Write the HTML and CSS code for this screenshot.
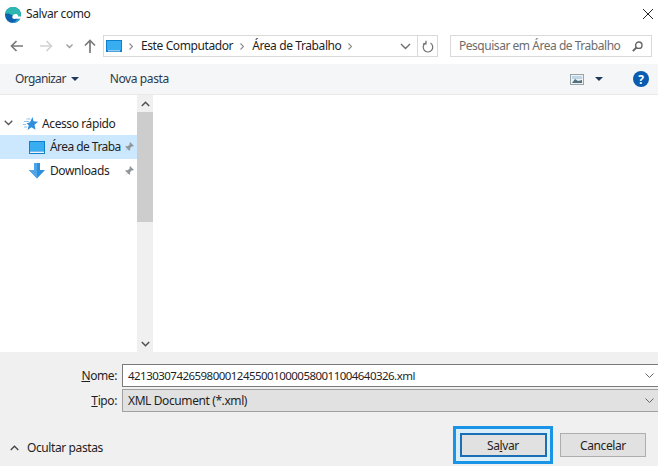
FILE: index.html
```html
<!DOCTYPE html>
<html lang="pt">
<head>
<meta charset="utf-8">
<title>Salvar como</title>
<link rel="stylesheet" href="styles.css">
</head>
<body>
<div class="dialog">
  <header class="titlebar">
    <svg class="edge" width="16" height="16" viewBox="0 0 16 16">
      <circle cx="8" cy="8" r="8" fill="#0d62ae"/>
      <path d="M.3 7C1 2.500 4.500 0 8 0c4.500 0 8 3.300 8 7.500 0 1.500-.6 2.500-2 2.800L7 8C4.500 6.300 1.500 6 .3 7z" fill="#2bb8b0"/>
      <path d="M7 15.900c3 .6 7-1 8.400-4.300l-3.400.8c-1.500 2-3.500 3-5 3.500z" fill="#2f9fd6"/>
      <path d="M7.300 10.300C7 8.200 9 6.700 11 7c1.600.3 2.300 1.300 2.100 2.600H16c0 1-.2 1.700-.6 2.200H10.500C8.800 12.300 7.500 11.700 7.300 10.300z" fill="#fff"/>
    </svg>
    <span class="title">Salvar como</span>
    <svg class="close" width="10" height="10" viewBox="0 0 10 10"><path d="M0 0l10 10M10 0L0 10" stroke="#222" stroke-width="1" fill="none"/></svg>
  </header>

  <nav class="navbar">
    <svg class="nav-btn" width="13" height="12" viewBox="0 0 13 12"><path d="M13 6H1.500M6.500 1L1.500 6l5 5" stroke="#7a7a7a" stroke-width="1.700" fill="none"/></svg>
    <svg class="nav-btn nav-forward" width="13" height="12" viewBox="0 0 13 12"><path d="M0 6h11.500M6.500 1l5 5-5 5" stroke="#d2d2d2" stroke-width="1.700" fill="none"/></svg>
    <svg class="nav-recent" width="7" height="5" viewBox="0 0 7 5"><path d="M.5.500L3.500 3.500 6.500.500" stroke="#9a9a9a" stroke-width="1.300" fill="none"/></svg>
    <svg class="nav-up" width="12" height="14" viewBox="0 0 12 14"><path d="M6 14V1.500M1 6.500l5-5 5 5" stroke="#7a7a7a" stroke-width="1.700" fill="none"/></svg>
    <div class="address">
      <svg class="monitor" width="16" height="12" viewBox="0 0 16 12"><rect width="16" height="12" fill="#0f7fd0"/><rect x="1" y="1" width="14" height="9" fill="#38aef0"/><rect x="2" y="10.300" width="12" height="1" fill="#d8eefb"/></svg>
      <svg class="crumb-sep" width="4" height="7" viewBox="0 0 4 7"><path d="M.5.500l3 3-3 3" stroke="#8a8a8a" stroke-width="1.100" fill="none"/></svg>
      <span class="crumb">Este Computador</span>
      <svg class="crumb-sep" width="4" height="7" viewBox="0 0 4 7"><path d="M.5.500l3 3-3 3" stroke="#8a8a8a" stroke-width="1.100" fill="none"/></svg>
      <span class="crumb">Área de Trabalho</span>
      <svg class="crumb-sep" width="4" height="7" viewBox="0 0 4 7"><path d="M.5.500l3 3-3 3" stroke="#8a8a8a" stroke-width="1.100" fill="none"/></svg>
      <span class="spacer"></span>
      <svg class="addr-chevron" width="11" height="7" viewBox="0 0 11 7"><path d="M1 1l4.500 4.500L10 1" stroke="#6d6d6d" stroke-width="1.400" fill="none"/></svg>
      <span class="addr-refresh">
        <svg width="12" height="13" viewBox="0 0 12 13"><path d="M3.800 2.400A4.800 4.800 0 1 0 8.500 2.600M4 .2v3.200H.9" stroke="#6f6f6f" stroke-width="1.200" fill="none" transform="translate(0 .5)"/></svg>
      </span>
    </div>
    <div class="search">
      <span class="search-text">Pesquisar em Área de Trabalho</span>
      <svg width="11" height="11" viewBox="0 0 11 11"><circle cx="6.800" cy="4.200" r="3.200" stroke="#666" stroke-width="1.400" fill="none"/><path d="M4.500 6.500L.8 10.200" stroke="#666" stroke-width="1.800"/></svg>
    </div>
  </nav>

  <div class="toolbar">
    <span class="tool organize">Organizar</span>
    <span class="caret"></span>
    <span class="tool new-folder">Nova pasta</span>
    <span class="spacer"></span>
    <svg class="view-icon" width="14" height="11" viewBox="0 0 14 11"><rect x=".5" y=".5" width="13" height="10" fill="#eef2f5" stroke="#9aa3a8"/><rect x="2" y="2" width="10" height="3" fill="#bcd6e6"/><path d="M2 9l3-4 3 2 4-1v3z" fill="#54707f"/></svg>
    <span class="caret caret-view"></span>
    <span class="help">?</span>
  </div>

  <main class="browser">
    <aside class="tree">
      <div class="tree-row tree-quick">
        <svg class="twisty" width="9" height="6" viewBox="0 0 9 6"><path d="M.7.700L4.500 4.500 8.300.700" stroke="#555" stroke-width="1.300" fill="none"/></svg>
        <svg class="star" width="15" height="13" viewBox="0 0 15 13"><path d="M9.500 0l1 4.300 4.500.4-3.500 3 1 5-4-2.500L4.500 13l1.300-4.800L3.500 6.500 7 5.300z" fill="#2f8fdc"/><path d="M0 7.500h3M1 10h3M1 4.500h5M3.500 2h4" stroke="#8cc4ee" stroke-width="1"/></svg>
        <span>Acesso rápido</span>
      </div>
      <div class="tree-row tree-item selected">
        <svg class="tree-icon" width="16" height="13" viewBox="0 0 16 13"><rect width="16" height="13" fill="#0f7fd0"/><rect x="1" y="1" width="14" height="9" fill="#38aef0"/><rect x="1" y="10.500" width="14" height="1.500" fill="#eaf6fd"/></svg>
        <span class="tree-label tree-label-clip">Área de Traba</span>
        <svg class="pin" width="10" height="10" viewBox="0 0 10 10"><path d="M6 0l4 4-1 .6-1-.3L6 6.300l.3 1.700-1 .8L3.500 7 .5 10l2.800-3.300L1.300 4.800l.8-.8 1.700.3 2-2-.3-1z" fill="#8f979b"/></svg>
      </div>
      <div class="tree-row tree-item">
        <svg class="tree-icon" width="16" height="16" viewBox="0 0 16 16"><path d="M5 0h6v7h5l-8 8.500L0 7h5z" fill="#2f8fdc"/><path d="M5 0h3v15.500L0 7h5z" fill="#4fa5e8"/></svg>
        <span class="tree-label">Downloads</span>
        <svg class="pin" width="10" height="10" viewBox="0 0 10 10"><path d="M6 0l4 4-1 .6-1-.3L6 6.300l.3 1.700-1 .8L3.500 7 .5 10l2.800-3.300L1.300 4.800l.8-.8 1.700.3 2-2-.3-1z" fill="#8f979b"/></svg>
      </div>
    </aside>
    <div class="scrollbar">
      <span class="scroll-arrow"><svg width="9" height="6" viewBox="0 0 9 6"><path d="M.8 5L4.500 1.300 8.200 5" stroke="#505050" stroke-width="1.500" fill="none"/></svg></span>
      <span class="scroll-thumb"></span>
      <span class="spacer"></span>
      <span class="scroll-arrow"><svg width="9" height="6" viewBox="0 0 9 6"><path d="M.8 1L4.500 4.700 8.200 1" stroke="#505050" stroke-width="1.500" fill="none"/></svg></span>
    </div>
    <section class="files"></section>
  </main>

  <footer class="footer">
    <div class="form-grid">
      <label class="form-label"><u>N</u>ome:</label>
      <div class="field field-name">
        <span class="file-name">42130307426598000124550010000580011004640326.xml</span>
        <svg width="9" height="5" viewBox="0 0 9 5"><path d="M.5.500l4 4 4-4" stroke="#666" stroke-width="1" fill="none"/></svg>
      </div>
      <label class="form-label"><u>T</u>ipo:</label>
      <div class="field field-type">
        <span>XML Document (*.xml)</span>
        <svg width="9" height="5" viewBox="0 0 9 5"><path d="M.5.500l4 4 4-4" stroke="#666" stroke-width="1" fill="none"/></svg>
      </div>
    </div>
    <div class="actions">
      <div class="hide-folders">
        <svg width="9" height="6" viewBox="0 0 9 6"><path d="M.7 5L4.500 1.200 8.300 5" stroke="#444" stroke-width="1.300" fill="none"/></svg>
        <span>Ocultar pastas</span>
      </div>
      <span class="spacer"></span>
      <div class="focus-ring"><button class="btn btn-default">Sa<u>l</u>var</button></div>
      <button class="btn btn-cancel">Cancelar</button>
    </div>
  </footer>
</div>
</body>
</html>
```

FILE: styles.css
```css
* { box-sizing: border-box; }
html, body { margin: 0; padding: 0; }
body {
  width: 658px;
  height: 466px;
  overflow: hidden;
  background: #fff;
  font-family: "Noto Sans", "Open Sans", sans-serif;
  font-size: 12px;
  letter-spacing: -0.4px;
  color: #1f1f1f;
}
.dialog { display: flex; flex-direction: column; width: 658px; height: 466px; }
.spacer { flex: 1; }

.titlebar { display: flex; align-items: center; height: 30px; padding: 0 0 1px 5px; }
.title { margin-left: 5px; margin-bottom: 2px; flex: 1; }
.close { margin-right: 5px; margin-top: -2px; }

.navbar { display: flex; align-items: center; height: 34px; padding: 0 0 2px 10px; }
.nav-forward { margin-left: 17px; }
.nav-recent { margin-left: 13px; }
.nav-up { margin-left: 11px; }
.address {
  display: flex; align-items: center;
  width: 335px; height: 22px; margin-left: 7px;
  border: 1px solid #d9d9d9; padding-left: 2px;
}
.crumb { margin-bottom: 2px; }
.crumb-sep { margin: 0 8px 0 7px; }
.addr-chevron { margin-right: 6px; }
.addr-refresh {
  display: flex; align-items: center; justify-content: center;
  width: 20px; height: 20px; border-left: 1px solid #d9d9d9;
}
.search {
  display: flex; align-items: center; justify-content: space-between;
  width: 202px; height: 22px; margin-left: 12px;
  border: 1px solid #d9d9d9; padding: 0 8px;
  color: #6d6d6d;
}
.search-text { white-space: nowrap; letter-spacing: -0.47px; margin-bottom: 2px; }

.toolbar {
  display: flex; align-items: center;
  height: 31px; padding: 0 9px 0 15px;
  background: #f5f6f7; border-bottom: 1px solid #e9e9e9;
  color: #2c3a4a;
}
.tool { margin-bottom: 2px; }
.organize { letter-spacing: -0.6px; }
.caret {
  width: 0; height: 0; margin-left: 5px;
  border-left: 4px solid transparent; border-right: 4px solid transparent;
  border-top: 4px solid #1e395b;
}
.new-folder { margin-left: 31px; }
.caret-view { margin-left: 11px; }
.help {
  display: flex; align-items: center; justify-content: center;
  width: 16px; height: 16px; margin-left: 30px;
  border-radius: 50%; background: #0a5cb0;
  color: #fff; font-weight: 700; font-size: 12px; letter-spacing: 0;
}

.browser { display: flex; flex: 1; min-height: 0; }
.tree { width: 137px; padding-top: 16px; }
.tree-row { display: flex; align-items: center; height: 24px; }
.tree-quick { padding-left: 4px; }
.star { margin-left: 10px; margin-right: 4px; }
.tree-item { padding-left: 29px; }
.tree-icon { flex: none; }
.tree-label { margin-left: 5px; margin-bottom: 1px; flex: 1; white-space: nowrap; }
.tree-label-clip { letter-spacing: -0.55px; }
.tree-item .pin { margin-right: 3px; }
.selected { background: #cce8ff; }
.scrollbar { display: flex; flex-direction: column; width: 16px; background: #f0f0f0; }
.scroll-arrow { display: flex; align-items: center; justify-content: center; height: 17px; }
.scroll-thumb { height: 110px; background: #cdcdcd; }
.files { flex: 1; background: #fff; }

.footer { height: 114px; background: #f0f0f0; display: flex; flex-direction: column; }
.form-grid {
  display: grid; grid-template-columns: 118px 1fr; grid-auto-rows: 23px;
  row-gap: 2px; padding: 12px 0 0 0; align-items: center;
}
.form-label { text-align: right; padding-right: 1px; color: #1f1f1f; }
.field {
  display: flex; align-items: center; justify-content: space-between;
  height: 23px; margin-left: 4px; padding: 0 4px 0 5px;
}
.file-name { font-size: 11.5px; letter-spacing: -0.53px; }
.field-name { background: #fff; border: 1px solid #7a7a7a; border-right: none; }
.field-type { background: #e1e1e1; border: 1px solid #a0a0a0; border-right: none; }

.actions { display: flex; align-items: flex-start; flex: 1; padding: 0 12px 0 10px; margin-top: 14px; }
.hide-folders { display: flex; align-items: center; gap: 8px; margin-top: 13px; }
.focus-ring {
  display: flex; align-items: center; justify-content: center;
  width: 100px; height: 38px; border: 3px solid #1a94e6; background: #d9effc;
  margin-right: 7px;
}
.btn {
  font: inherit; letter-spacing: inherit; color: #1f1f1f; padding: 0; margin: 0;
  width: 86px; height: 24px; background: #e1e1e1; border: 1px solid #adadad;
}
.btn-cancel { margin-top: 7px; }
.btn-default { width: 87px; border: 2px solid #1a6fb5; }
```
